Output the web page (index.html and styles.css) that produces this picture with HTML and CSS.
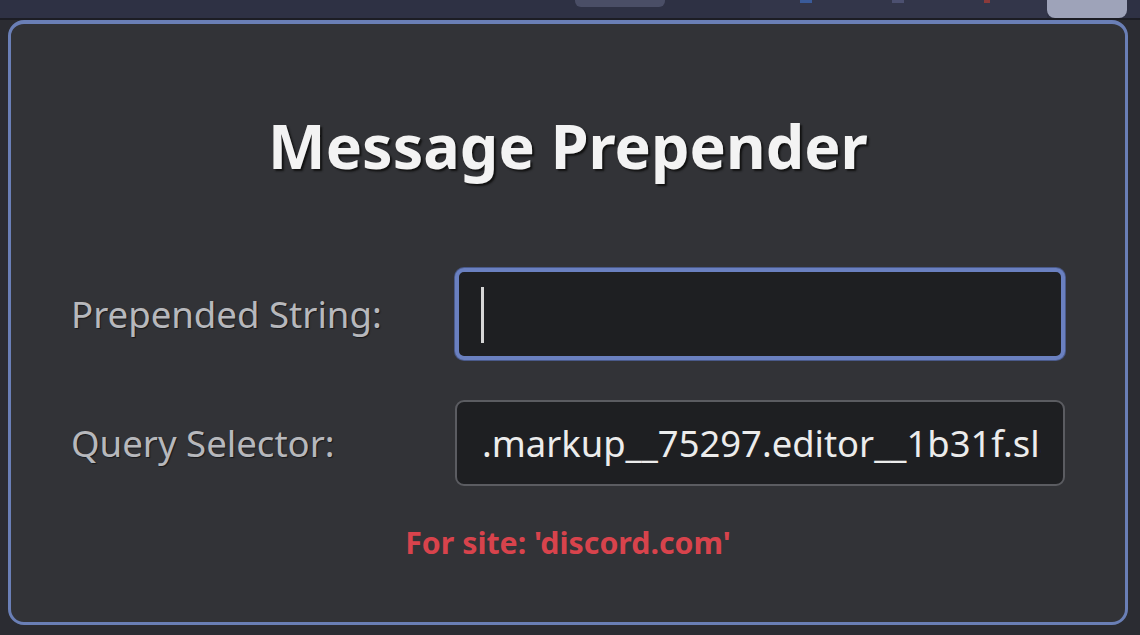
FILE: index.html
```html
<!DOCTYPE html>
<html lang="en">
<head>
  <meta charset="UTF-8">
  <meta name="viewport" content="width=device-width, initial-scale=1.0">
  <title>Message Prepender</title>
  <link rel="stylesheet" href="styles.css">
</head>
<body>
  <!-- Browser toolbar strip behind the popup -->
  <div class="toolbar">
    <div class="toolbar-left"></div>
    <div class="tab-chip"></div>
    <div class="toolbar-icons">
      <span class="dot dot-a"></span>
      <span class="dot dot-b"></span>
      <span class="dot dot-c"></span>
    </div>
    <div class="ext-button"></div>
  </div>

  <!-- Extension popup -->
  <div class="popup">
    <h1 class="popup-title">Message Prepender</h1>

    <form class="settings">
      <label class="field-label" for="prependString">Prepended String:</label>
      <div class="field-wrap">
        <input type="text" id="prependString" class="field field-focused" value="">
        <span class="caret"></span>
      </div>

      <label class="field-label" for="querySelector">Query Selector:</label>
      <div class="field-wrap">
        <input type="text" id="querySelector" class="field" value=".markup__75297.editor__1b31f.slateTextArea__0661c">
      </div>
    </form>

    <p class="site-note">For site: 'discord.com'</p>
  </div>
</body>
</html>
```

FILE: styles.css
```css
body {
  margin: 0;
  padding: 0;
  background: #2b2c32;
  font-family: 'Noto Sans', 'Open Sans', sans-serif;
  height: 635px;
  overflow: hidden;
}

/* Toolbar */
.toolbar {
  height: 18px;
  background: #2e3144;
  border-bottom: 2px solid #1c1d24;
  display: flex;
  align-items: flex-start;
}

.toolbar-left {
  width: 575px;
  flex-shrink: 0;
}

.tab-chip {
  width: 90px;
  height: 7px;
  flex-shrink: 0;
  background: #4a4e66;
  border-radius: 0 0 6px 6px;
}

.toolbar-icons {
  flex: 1;
  display: flex;
  gap: 80px;
  padding-left: 50px;
  height: 18px;
  background: #33364a;
  margin-left: 85px;
}

.dot {
  width: 12px;
  height: 3px;
  background: #4c5070;
}

.dot-a { background: #3a5b9a; }
.dot-c { background: #8b3a3a; width: 6px; }

.ext-button {
  width: 80px;
  height: 18px;
  flex-shrink: 0;
  margin-right: 13px;
  background: #9ea3b9;
  border-radius: 0 0 8px 8px;
}

/* Popup */
.popup {
  margin: 0 12px 0 8px;
  height: 598px;
  background: #323337;
  border: 3px solid #6a7fb6;
  border-top-width: 4px;
  border-radius: 16px;
  display: flex;
  flex-direction: column;
  align-items: center;
  box-sizing: content-box;
}

.popup-title {
  margin: 84px 0 0;
  font-size: 61px;
  line-height: 76px;
  font-weight: 700;
  color: #f3f3f3;
  text-shadow: 2px 2px 2px #111;
}

.settings {
  margin-top: 84px;
  width: 994px;
  display: grid;
  grid-template-columns: 384px 1fr;
  row-gap: 40px;
  align-items: center;
}

.field-label {
  font-size: 36.6px;
  color: #b7b8bc;
  text-shadow: 1px 1px 1px #18191c;
}

.field-wrap {
  position: relative;
}

.field {
  display: block;
  width: 100%;
  height: 86px;
  box-sizing: border-box;
  padding: 0 22px 0 25px;
  background: #1e1f22;
  border: 2px solid #5b5c61;
  border-radius: 9px;
  color: #ececec;
  font-family: 'Noto Sans', 'Open Sans', sans-serif;
  font-size: 36.4px;
  outline: none;
}

.field-focused {
  height: 92px;
  border: 4px solid #6a80c0;
  box-shadow: 0 0 0 1px #4a5a8a;
}

.caret {
  position: absolute;
  left: 26px;
  top: 19px;
  width: 3px;
  height: 56px;
  background: #d6d6d6;
}

.site-note {
  margin: 36px 0 0;
  font-size: 30.3px;
  font-weight: 700;
  color: #d8434c;
}
```
